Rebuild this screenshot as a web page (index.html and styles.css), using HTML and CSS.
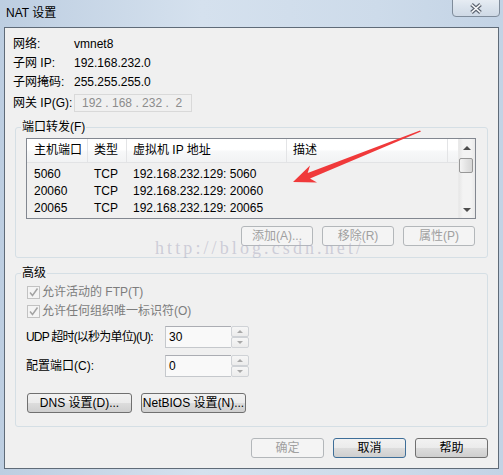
FILE: index.html
```html
<!DOCTYPE html>
<html lang="zh-CN">
<head>
<meta charset="utf-8"/>
<title>NAT 设置</title>
<link rel="stylesheet" href="styles.css">
</head>
<body>
<div class="window">
    <div class="titlebar">
        <span class="title">NAT 设置</span>
        <button class="close-btn" type="button" aria-label="关闭">
            <svg width="14" height="11" viewBox="0 0 14 11">
                <path d="M2.5 1.5 L11.5 9.5 M11.5 1.5 L2.5 9.5" stroke="#5b6370" stroke-width="3.8" fill="none"/>
                <path d="M2.5 1.5 L11.5 9.5 M11.5 1.5 L2.5 9.5" stroke="#fbfcfd" stroke-width="1.6" fill="none"/>
            </svg>
        </button>
    </div>

    <div class="client">
        <div class="info">
            <span>网络:</span><span>vmnet8</span>
            <span>子网 IP:</span><span>192.168.232.0</span>
            <span>子网掩码:</span><span>255.255.255.0</span>
            <span>网关 IP(G):</span><div class="ip-box">192 . 168 . 232 .  2</div>
        </div>

        <fieldset class="group">
            <legend>端口转发(F)</legend>
            <div class="listview">
                <div class="list-body">
                    <div class="list-head">
                        <span class="cell c1">主机端口</span>
                        <span class="cell">类型</span>
                        <span class="cell">虚拟机 IP 地址</span>
                        <span class="cell">描述</span>
                        <span class="cell"></span>
                    </div>
                    <div class="list-rows">
                        <div class="list-row"><span class="cell c1">5060</span><span class="cell">TCP</span><span class="cell">192.168.232.129: 5060</span><span class="cell"></span></div>
                        <div class="list-row"><span class="cell c1">20060</span><span class="cell">TCP</span><span class="cell">192.168.232.129: 20060</span><span class="cell"></span></div>
                        <div class="list-row"><span class="cell c1">20065</span><span class="cell">TCP</span><span class="cell">192.168.232.129: 20065</span><span class="cell"></span></div>
                    </div>
                </div>
                <div class="vscroll">
                    <div class="sb-btn"><i class="tri-up"></i></div>
                    <div class="sb-thumb"></div>
                    <div class="sb-btn sb-down"><i class="tri-down"></i></div>
                </div>
            </div>
            <div class="btn-row">
                <button class="btn" type="button" disabled>添加(A)...</button>
                <button class="btn" type="button" disabled>移除(R)</button>
                <button class="btn" type="button" disabled>属性(P)</button>
            </div>
        </fieldset>

        <fieldset class="group advanced">
            <legend>高级</legend>
            <label class="check">
                <span class="box"><svg width="11" height="11" viewBox="0 0 11 11"><path d="M2 5.5 L4.5 8.5 L9.5 1.5" stroke="#a3a3a3" stroke-width="1.5" fill="none"/></svg></span>
                允许活动的 FTP(T)
            </label>
            <label class="check">
                <span class="box"><svg width="11" height="11" viewBox="0 0 11 11"><path d="M2 5.5 L4.5 8.5 L9.5 1.5" stroke="#a3a3a3" stroke-width="1.5" fill="none"/></svg></span>
                允许任何组织唯一标识符(O)
            </label>
            <div class="field-row">
                <span class="field-label tight">UDP 超时(以秒为单位)(U):</span>
                <div class="spin">
                    <span class="spin-text">30</span>
                    <div class="spin-btns">
                        <span class="spin-btn"><i class="tri-up small"></i></span>
                        <span class="spin-btn"><i class="tri-down small"></i></span>
                    </div>
                </div>
            </div>
            <div class="field-row">
                <span class="field-label">配置端口(C):</span>
                <div class="spin">
                    <span class="spin-text">0</span>
                    <div class="spin-btns">
                        <span class="spin-btn"><i class="tri-up small"></i></span>
                        <span class="spin-btn"><i class="tri-down small"></i></span>
                    </div>
                </div>
            </div>
            <div class="dns-row">
                <button class="btn wide" type="button">DNS 设置(D)...</button>
                <button class="btn wide" type="button">NetBIOS 设置(N)...</button>
            </div>
        </fieldset>

        <div class="dialog-buttons">
            <button class="btn" type="button" disabled>确定</button>
            <button class="btn default" type="button">取消</button>
            <button class="btn" type="button">帮助</button>
        </div>
    </div>

    <div class="watermark">http://blog.csdn.net/</div>

    <svg class="pointer" width="503" height="475" viewBox="0 0 503 475">
        <polygon points="293,182 317,182.5 310,178.5 421,131.6 420,130.4 307.7,172.9 310,165.5" fill="#f0393a"/>
    </svg>
</div>
</body>
</html>
```

FILE: styles.css
```css
* {
    box-sizing: border-box;
}

body {
    margin: 0;
    font: 12px/14px "Liberation Sans", "Noto Sans CJK SC", sans-serif;
    color: #000;
    background: #c9d8e8;
}

.window {
    position: relative;
    width: 503px;
    height: 475px;
    padding: 0 4px 5px 4px;
    background: linear-gradient(to right, #bdcee1, #d5e1ee 40%, #cddbea 75%, #c3d3e5);
    overflow: hidden;
}

/* title bar */
.titlebar {
    height: 27px;
    display: flex;
    justify-content: space-between;
    align-items: flex-start;
}

.title {
    padding: 7px 0 0 2px;
    line-height: 12px;
}

.close-btn {
    width: 48px;
    height: 18px;
    margin: -1px -1px 0 0;
    padding: 0;
    border: 1px solid #7f8c9b;
    border-radius: 0 0 4px 4px;
    background: linear-gradient(#e6ecf3, #d9e2ec 50%, #cfd9e5);
    display: flex;
    align-items: center;
    justify-content: center;
}

/* client area */
.client {
    border: 1px solid #5f6b78;
    background: #f0f0f0;
    padding: 0 10px 10px 10px;
}

.info {
    display: grid;
    grid-template-columns: 61px auto;
    grid-template-rows: 18px 18px 18px 22px;
    row-gap: 1px;
    align-items: center;
    margin-left: -2px;
    padding-top: 7px;
}

.ip-box {
    width: 118px;
    height: 18px;
    border: 1px solid #d9d9d9;
    color: #8c8c8c;
    padding: 1px 0 0 7px;
    white-space: pre;
}

/* group boxes */
.group {
    margin: 6px 0 0 0;
    padding: 4px 11px 11px 10px;
    border: 1px solid #d5dfe5;
    border-radius: 3px;
    min-width: 0;
}

.group legend {
    margin-left: -5px;
    padding: 0 1px;
    line-height: 14px;
}

.group.advanced {
    margin-top: 8px;
    padding: 3px 11px 13px 10px;
}

/* list view */
.listview {
    display: flex;
    height: 81px;
    border: 1px solid #828790;
    background: #f0f0f0;
}

.list-body {
    flex: 1;
}

.list-head,
.list-row {
    display: grid;
    grid-template-columns: 61px 39px 160px 161px 1fr;
}

.list-head {
    height: 24px;
    background: linear-gradient(#ffffff, #ffffff 45%, #f7f8f9 55%, #f2f3f4);
    border-bottom: 1px solid #e2e3e5;
}

.list-head .cell {
    border-right: 1px solid #e3e4e6;
    line-height: 23px;
}

.list-head .cell:last-child {
    border-right: none;
}

.cell {
    padding-left: 6px;
    white-space: nowrap;
}

.cell.c1 {
    padding-left: 7px;
}

.list-rows {
    padding-top: 3px;
}

.list-row {
    height: 17px;
    line-height: 17px;
}

.vscroll {
    width: 17px;
    display: flex;
    flex-direction: column;
    background: linear-gradient(to right, #e7e7e7, #f3f3f3 25%, #f3f3f3 75%, #e9e9e9);
    border-left: 1px solid #eaeaea;
}

.sb-btn {
    height: 17px;
    display: flex;
    align-items: center;
    justify-content: center;
}

.sb-down {
    margin-top: auto;
}

.sb-thumb {
    width: 14px;
    height: 15px;
    margin: 2px 0 0 0;
    border: 1px solid #979797;
    border-radius: 2px;
    background: linear-gradient(to right, #f4f4f4, #e4e4e4 50%, #d6d6d6);
}

.tri-up,
.tri-down {
    width: 0;
    height: 0;
    border-left: 4px solid transparent;
    border-right: 4px solid transparent;
}

.tri-up {
    border-bottom: 4px solid #4d4d4d;
}

.tri-down {
    border-top: 4px solid #4d4d4d;
}

.tri-up.small {
    border-width: 0 3px 3px 3px;
    border-bottom-color: #a8a8a8;
}

.tri-down.small {
    border-width: 3px 3px 0 3px;
    border-top-color: #a8a8a8;
}

/* buttons */
.btn {
    width: 72px;
    height: 20px;
    padding: 0;
    border: 1px solid #707070;
    border-radius: 3px;
    background: linear-gradient(#f2f2f2, #ebebeb 50%, #dddddd 50%, #cfcfcf);
    font: inherit;
    color: #000;
}

.btn:disabled {
    border-color: #b3b7ba;
    background: #f4f4f4;
    color: #a0a0a0;
}

.btn.default {
    border-color: #3e6e98;
}

.btn.wide {
    width: 105px;
}

.btn-row {
    display: flex;
    justify-content: flex-end;
    gap: 9px;
    margin: 7px 1px 0 0;
}

/* advanced */
.check {
    display: flex;
    align-items: center;
    gap: 2px;
    height: 18px;
    margin-bottom: 1px;
    padding-left: 1px;
    color: #7d7d7d;
}

.box {
    width: 13px;
    height: 13px;
    border: 1px solid #c2c2c2;
    background: #f4f4f4;
    display: flex;
    align-items: center;
    justify-content: center;
}

.field-row {
    display: grid;
    grid-template-columns: 139px 84px;
    align-items: center;
    height: 22px;
    margin-top: 7px;
}

.check + .field-row {
    margin-top: 6px;
}

.field-label {
    white-space: nowrap;
}

.field-label.tight {
    letter-spacing: -0.8px;
}

.spin {
    display: flex;
    height: 22px;
}

.spin-text {
    flex: 1;
    border: 1px solid #c5c8cc;
    border-top-color: #abadb3;
    border-right: none;
    background: #f9f9f9;
    padding: 3px 0 0 3px;
}

.spin-btns {
    width: 18px;
    display: flex;
    flex-direction: column;
}

.spin-btn {
    flex: 1;
    border: 1px solid #cfd2d6;
    border-radius: 2px;
    background: linear-gradient(#f6f6f6, #ececec);
    display: flex;
    align-items: center;
    justify-content: center;
}

.dns-row {
    display: flex;
    gap: 9px;
    margin: 16px 0 0 1px;
}

.dialog-buttons {
    display: flex;
    justify-content: flex-end;
    gap: 9px;
    margin-top: 11px;
}

.dialog-buttons .btn {
    width: 73px;
}

/* overlays */
.watermark {
    position: absolute;
    left: 155px;
    top: 238px;
    font: 18px/20px "Liberation Serif", serif;
    letter-spacing: 3.1px;
    color: rgba(175, 175, 195, 0.55);
    pointer-events: none;
}

.pointer {
    position: absolute;
    left: 0;
    top: 0;
    pointer-events: none;
}
```
